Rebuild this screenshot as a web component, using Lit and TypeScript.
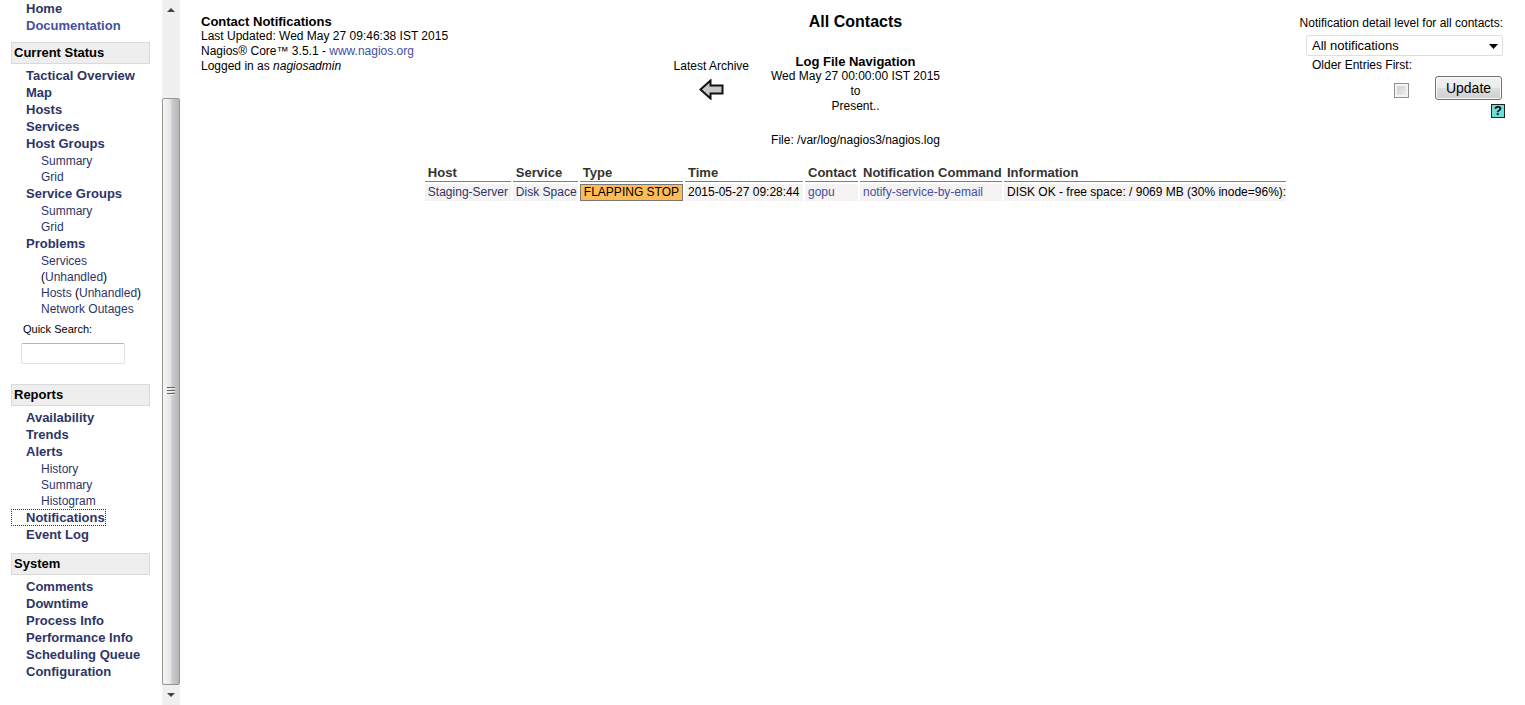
import { LitElement, html, css, svg, nothing } from "lit";
import { customElement, property, state } from "lit/decorators.js";
import { classMap } from "lit/directives/class-map.js";

interface NavItem {
  label: string;
  visited?: boolean;
  children?: string[];
}

interface NavSection {
  title: string;
  items: NavItem[];
}

const TOP_ITEMS: NavItem[] = [{ label: "Home" }, { label: "Documentation", visited: false }];

const STATUS: NavSection = {
  title: "Current Status",
  items: [
    { label: "Tactical Overview" },
    { label: "Map" },
    { label: "Hosts" },
    { label: "Services" },
    { label: "Host Groups", children: ["Summary", "Grid"] },
    { label: "Service Groups", children: ["Summary", "Grid"] },
    {
      label: "Problems",
      children: ["Services (Unhandled)", "Hosts (Unhandled)", "Network Outages"],
    },
  ],
};

const REPORTS: NavSection = {
  title: "Reports",
  items: [
    { label: "Availability" },
    { label: "Trends" },
    { label: "Alerts", children: ["History", "Summary", "Histogram"] },
    { label: "Notifications" },
    { label: "Event Log" },
  ],
};

const SYSTEM: NavSection = {
  title: "System",
  items: [
    { label: "Comments" },
    { label: "Downtime" },
    { label: "Process Info" },
    { label: "Performance Info" },
    { label: "Scheduling Queue" },
    { label: "Configuration" },
  ],
};

@customElement("nagios-sidebar")
export class NagiosSidebar extends LitElement {
  @state() private current = "Notifications";

  static styles = css`
    :host {
      display: flex;
      flex: none;
      width: 180px;
      height: 100vh;
      overflow: hidden;
      font-family: "Liberation Sans", Arial, sans-serif;
      font-size: 12px;
      line-height: 17px;
    }
    .menu {
      flex: 1;
      min-width: 0;
      padding: 0 12px 0 11px;
    }
    ul {
      list-style: none;
      margin: 0;
      padding: 0;
    }
    a {
      color: #2d3567;
      text-decoration: none;
    }
    a:hover {
      text-decoration: underline;
    }
    .section {
      margin: 0 0 10px;
    }
    .top {
      margin-bottom: 8px;
    }
    .heading {
      box-sizing: border-box;
      height: 22px;
      margin: 0 0 3px;
      padding: 0 2px;
      border: 1px solid #dadada;
      background: #eeeeee;
      color: #000;
      font-size: 13px;
      line-height: 20px;
    }
    .item > a {
      display: block;
      width: fit-content;
      padding: 0 1px 0 15px;
      font-size: 13px;
      font-weight: bold;
    }
    .item > a.plain {
      color: #4450a0;
    }
    .item > a.current {
      outline: 1px dotted #2d3567;
      outline-offset: -1px;
    }
    .sub {
      padding: 1px 0 0 30px;
      line-height: 16px;
    }
    .paren {
      color: #000;
    }
    .search {
      display: grid;
      justify-items: start;
      margin: 5px 0 20px 10px;
    }
    .search label {
      padding-left: 2px;
      font-size: 11px;
      line-height: 15px;
    }
    .search input {
      box-sizing: border-box;
      width: 104px;
      height: 21px;
      margin-top: 6px;
      padding: 1px 4px;
      border: 1px solid #dde0e8;
      border-top-color: #b4b6bb;
      border-radius: 2px;
      font: inherit;
    }
    .bar {
      box-sizing: border-box;
      display: flex;
      flex-direction: column;
      flex: none;
      width: 18px;
      background: #f0f0f0;
    }
    .step {
      display: grid;
      place-items: center;
      flex: none;
      height: 20px;
    }
    .before {
      flex: 78;
    }
    .thumb {
      box-sizing: border-box;
      display: grid;
      place-items: center;
      flex: 587;
      border: 1px solid #959595;
      border-radius: 2px;
      background: linear-gradient(90deg, #f6f6f6, #e6e6e8 45%, #c9cacd 60%, #b5b6b9);
    }
  `;

  private pick(label: string, event: Event) {
    event.preventDefault();
    this.current = label;
  }

  private subItem(label: string) {
    const match = label.match(/^(.*) \((.*)\)$/);
    if (!match) return html`<li><a href="#">${label}</a></li>`;
    return html`<li>
      <a href="#">${match[1]}</a>
      ${match[1] === "Services" ? html`<br />` : nothing}<span class="paren">(</span
      ><a href="#">${match[2]}</a><span class="paren">)</span>
    </li>`;
  }

  private items(items: NavItem[]) {
    return html`<ul>
      ${items.map(
        (item) => html`<li class="item">
          <a
            href="#"
            class=${classMap({
              plain: item.visited === false,
              current: item.label === this.current,
            })}
            @click=${(e: Event) => this.pick(item.label, e)}
            >${item.label}</a
          >
          ${item.children
            ? html`<ul class="sub">
                ${item.children.map((c) => this.subItem(c))}
              </ul>`
            : nothing}
        </li>`
      )}
    </ul>`;
  }

  private section(section: NavSection, extra: unknown = nothing) {
    return html`<section class="section">
      <h2 class="heading">${section.title}</h2>
      ${this.items(section.items)} ${extra}
    </section>`;
  }

  render() {
    return html`
      <nav class="menu">
        <div class="section top">${this.items(TOP_ITEMS)}</div>
        ${this.section(
          STATUS,
          html`<form class="search">
            <label for="quick">Quick Search:</label>
            <input id="quick" type="text" />
          </form>`
        )}
        ${this.section(REPORTS)} ${this.section(SYSTEM)}
      </nav>
      <div class="bar" aria-hidden="true">
        <div class="step">
          <svg width="8" height="4" viewBox="0 0 8 4"><path d="M0 4 4 0l4 4z" fill="#444" /></svg>
        </div>
        <div class="before"></div>
        <div class="thumb">
          <svg width="8" height="10" viewBox="0 0 8 10">
            <path d="M0 1.5h8M0 4.5h8M0 7.5h8" stroke="#666" />
            <path d="M0 2.5h8M0 5.5h8M0 8.5h8" stroke="#eee" />
          </svg>
        </div>
        <div class="step">
          <svg width="8" height="4" viewBox="0 0 8 4"><path d="M0 0h8L4 4z" fill="#444" /></svg>
        </div>
      </div>
    `;
  }
}

const arrowLeft = svg`<path d="M1.500 10.500 11.500 1.500V6.500H23.500V14.500H11.500V19.500z" fill="#c8c8c8" stroke="#111" stroke-width="2" />`;

@customElement("nagios-header")
export class NagiosHeader extends LitElement {
  static styles = css`
    :host {
      display: grid;
      grid-template-columns: 1fr 1fr 1fr;
      font-size: 12px;
      line-height: 15px;
    }
    h1,
    h2,
    p {
      margin: 0;
    }
    a {
      color: #4450a0;
      text-decoration: none;
    }
    .info {
      padding: 14px 0 0 15px;
    }
    .name {
      font-size: 13px;
      line-height: 15px;
    }
    .centre {
      text-align: center;
    }
    .title {
      padding-top: 12px;
      font-size: 16px;
      line-height: 20px;
    }
    .log {
      display: grid;
      grid-template-columns: 1fr auto 1fr;
      column-gap: 22px;
      margin-top: 22px;
    }
    .archive {
      display: grid;
      justify-self: end;
      align-content: start;
      justify-items: center;
      gap: 5px;
      padding-top: 5px;
      color: #000;
    }
    .file {
      margin-top: 19px;
    }
    .filter {
      display: grid;
      justify-items: end;
      align-content: start;
      padding: 16px 20px 0 0;
    }
    .top {
      padding-right: 2px;
    }
    .pick {
      position: relative;
      width: 197px;
      margin: 4px 2px 0 0;
    }
    .pick select {
      display: block;
      box-sizing: border-box;
      width: 100%;
      height: 21px;
      padding: 0 20px 0 5px;
      border: 1px solid #dcdfe8;
      border-radius: 2px;
      background: #fff;
      color: #000;
      font: 13px/19px "Liberation Sans", Arial, sans-serif;
      appearance: none;
    }
    .pick svg {
      position: absolute;
      right: 5px;
      top: 9px;
      pointer-events: none;
    }
    .older {
      width: 191px;
      margin: 2px 2px 0 0;
    }
    .actions {
      display: flex;
      align-items: center;
      gap: 26px;
      margin: 3px 3px 0 0;
    }
    .actions input {
      appearance: none;
      width: 15px;
      height: 15px;
      margin: 4px 0 0;
      border: 1px solid #8e8f8f;
      background: linear-gradient(135deg, #c4c8ce, #f6f6f6);
      box-shadow: inset 0 0 0 2px #f4f4f4;
    }
    .actions input:checked {
      background: #2d3567;
    }
    .actions button {
      box-sizing: border-box;
      width: 67px;
      height: 24px;
      padding: 0;
      border: 1px solid #707070;
      border-radius: 3px;
      background: linear-gradient(#f2f2f2, #ebebeb 50%, #dddddd 51%, #cfcfcf);
      box-shadow: inset 0 0 0 1px #fafafa;
      color: #000;
      font: 14px/22px "Liberation Sans", Arial, sans-serif;
    }
    .help {
      box-sizing: border-box;
      width: 14px;
      height: 14px;
      margin-top: 4px;
      border: 1px solid #222;
      background: #6fdcd8;
      color: #000;
      font-size: 13px;
      font-weight: bold;
      line-height: 12px;
      text-align: center;
    }
  `;

  render() {
    return html`
      <div class="info">
        <h1 class="name">Contact Notifications</h1>
        <p>Last Updated: Wed May 27 09:46:38 IST 2015</p>
        <p>Nagios® Core™ 3.5.1 - <a href="#">www.nagios.org</a></p>
        <p>Logged in as <i>nagiosadmin</i></p>
      </div>
      <div class="centre">
        <h2 class="title">All Contacts</h2>
        <div class="log">
          <a class="archive" href="#">
            Latest Archive
            <svg width="25" height="21" viewBox="0 0 25 21">${arrowLeft}</svg>
          </a>
          <div>
            <h2 class="name">Log File Navigation</h2>
            <p>Wed May 27 00:00:00 IST 2015</p>
            <p>to</p>
            <p>Present..</p>
          </div>
        </div>
        <p class="file">File: /var/log/nagios3/nagios.log</p>
      </div>
      <form class="filter" @submit=${(e: Event) => e.preventDefault()}>
        <label class="top" for="level">Notification detail level for all contacts:</label>
        <div class="pick">
          <select id="level">
            <option>All notifications</option>
            <option>All service notifications</option>
            <option>All host notifications</option>
          </select>
          <svg width="9" height="5" viewBox="0 0 9 5"><path d="M0 0h9L4.500 5z" /></svg>
        </div>
        <label class="older" for="older">Older Entries First:</label>
        <div class="actions">
          <input id="older" type="checkbox" />
          <button type="submit">Update</button>
        </div>
        <a class="help" href="#" aria-label="Help">?</a>
      </form>
    `;
  }
}

interface NotificationRow {
  host: string;
  service: string;
  type: string;
  time: string;
  contact: string;
  command: string;
  info: string;
}

@customElement("nagios-notifications")
export class NagiosNotifications extends LitElement {
  @property({ attribute: false }) rows: NotificationRow[] = [];

  static styles = css`
    :host {
      display: block;
      margin-top: 14px;
    }
    table {
      margin: 0 auto;
      border-collapse: separate;
      border-spacing: 2px;
      font-size: 12px;
      line-height: 13px;
      white-space: nowrap;
    }
    th,
    td {
      box-sizing: border-box;
      padding: 2px 0 2px 3px;
      text-align: left;
    }
    th {
      border-bottom: 1px solid #808080;
      color: #333;
      font-size: 13px;
    }
    td {
      background: #f4f2f2;
      color: #000;
    }
    a {
      color: #4450a0;
      text-decoration: none;
    }
    .dark {
      color: #2d3567;
    }
    .flapping {
      padding: 1px 3px;
      border: 1px solid #777;
      background: #ffbb55;
    }
    .host {
      min-width: 86px;
    }
    .service {
      min-width: 65px;
    }
    .type {
      min-width: 103px;
    }
    .time {
      min-width: 118px;
    }
    .contact {
      min-width: 53px;
    }
    .command {
      min-width: 142px;
    }
    .info {
      min-width: 280px;
    }
  `;

  render() {
    return html`<table>
      <thead>
        <tr>
          <th class="host">Host</th>
          <th class="service">Service</th>
          <th class="type">Type</th>
          <th class="time">Time</th>
          <th class="contact">Contact</th>
          <th class="command">Notification Command</th>
          <th class="info">Information</th>
        </tr>
      </thead>
      <tbody>
        ${this.rows.map(
          (r) => html`<tr>
            <td><a class="dark" href="#">${r.host}</a></td>
            <td><a class="dark" href="#">${r.service}</a></td>
            <td class="flapping">${r.type}</td>
            <td>${r.time}</td>
            <td><a href="#">${r.contact}</a></td>
            <td><a href="#">${r.command}</a></td>
            <td>${r.info}</td>
          </tr>`
        )}
      </tbody>
    </table>`;
  }
}

@customElement("app-root")
export class AppRoot extends LitElement {
  static styles = css`
    :host {
      display: flex;
      min-height: 100vh;
      background: #fff;
      color: #000;
      font-family: "Liberation Sans", Arial, sans-serif;
    }
    .content {
      flex: 1;
      min-width: 0;
      padding-left: 6px;
    }
  `;

  private rows: NotificationRow[] = [
    {
      host: "Staging-Server",
      service: "Disk Space",
      type: "FLAPPING STOP",
      time: "2015-05-27 09:28:44",
      contact: "gopu",
      command: "notify-service-by-email",
      info: "DISK OK - free space: / 9069 MB (30% inode=96%):",
    },
  ];

  render() {
    return html`
      <nagios-sidebar></nagios-sidebar>
      <main class="content">
        <nagios-header></nagios-header>
        <nagios-notifications .rows=${this.rows}></nagios-notifications>
      </main>
    `;
  }
}
